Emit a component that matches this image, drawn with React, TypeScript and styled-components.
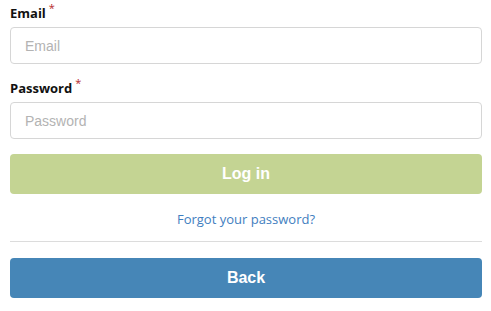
import React, { useState } from "react";
import styled, { createGlobalStyle } from "styled-components";

const GlobalStyle = createGlobalStyle`
  body {
    margin: 0;
    background: #fff;
    font-family: "Open Sans", "Liberation Sans", Arial, sans-serif;
  }
`;

const Form = styled.form`
  display: flex;
  flex-direction: column;
  padding: 4px 9px 0 10px;
`;

const Field = styled.div`
  display: flex;
  flex-direction: column;
  margin-bottom: 15px;
`;

const Label = styled.label`
  font-size: 13px;
  line-height: 18px;
  font-weight: 700;
  color: #111;
  margin-bottom: 5px;
`;

const Required = styled.sup`
  color: #b5292b;
  font-size: 11px;
  font-weight: 400;
  margin-left: 3px;
  line-height: 0;
  position: relative;
  top: -1px;
`;

const Input = styled.input`
  box-sizing: border-box;
  height: 37px;
  width: 100%;
  padding: 0 14px;
  border: 1px solid #d6d6d6;
  border-radius: 4px;
  font-family: "Liberation Sans", Arial, sans-serif;
  font-size: 14px;
  color: #333;
  outline: none;

  &::placeholder {
    color: #b3b3b3;
  }
`;

const Button = styled.button<{ $tone: "green" | "blue" }>`
  height: 40px;
  width: 100%;
  border: none;
  border-radius: 4px;
  background: ${(p) => (p.$tone === "green" ? "#c4d493" : "#4686b7")};
  color: #fff;
  font-family: "Liberation Sans", Arial, sans-serif;
  font-size: 16px;
  font-weight: 700;
  cursor: pointer;
`;

const ForgotLink = styled.a`
  align-self: center;
  margin: 16px 0 13px;
  font-size: 13px;
  line-height: 18px;
  color: #3f7ec0;
  text-decoration: none;
`;

const Divider = styled.hr`
  width: 100%;
  margin: 0 0 16px;
  border: none;
  border-top: 1px solid #dcdcdc;
`;

function App() {
  const [email, setEmail] = useState("");
  const [password, setPassword] = useState("");

  return (
    <>
      <GlobalStyle />
      <Form onSubmit={(e) => e.preventDefault()}>
        <Field>
          <Label htmlFor="email">
            Email<Required>*</Required>
          </Label>
          <Input
            id="email"
            type="email"
            placeholder="Email"
            value={email}
            onChange={(e) => setEmail(e.target.value)}
          />
        </Field>
        <Field>
          <Label htmlFor="password">
            Password<Required>*</Required>
          </Label>
          <Input
            id="password"
            type="password"
            placeholder="Password"
            value={password}
            onChange={(e) => setPassword(e.target.value)}
          />
        </Field>
        <Button type="submit" $tone="green">
          Log in
        </Button>
        <ForgotLink href="#">Forgot your password?</ForgotLink>
        <Divider />
        <Button type="button" $tone="blue">
          Back
        </Button>
      </Form>
    </>
  );
}

export default App;
